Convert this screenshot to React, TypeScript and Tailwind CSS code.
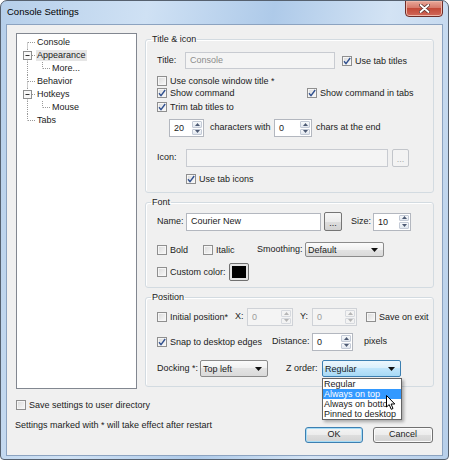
import React from "react";

const dot = { stroke: "#9a9a9a", strokeDasharray: "1 1" } as const;

function Check({ label, checked = false, className = "" }: { label?: string; checked?: boolean; className?: string }) {
  return (
    <div className={`flex h-[12px] items-center ${className}`}>
      <span className="flex h-[10px] w-[10px] shrink-0 items-center justify-center border border-[#8f8f8f] bg-[linear-gradient(135deg,#d9d9d9,#fafafa)] shadow-[inset_0_0_0_1px_#f6f6f6]">
        {checked && (
          <svg width="8" height="8" viewBox="0 0 8 8">
            <path d="M1 4.2L3 6.6L7.2 1" fill="none" stroke="#30508f" strokeWidth="1.4" />
          </svg>
        )}
      </span>
      {label && <span className="ml-[3px] whitespace-nowrap leading-[12px]">{label}</span>}
    </div>
  );
}

function Tri({ up = false, color = "#4d5a73" }: { up?: boolean; color?: string }) {
  return (
    <svg width="5" height="3" viewBox="0 0 5 3">
      <path d={up ? "M0 3L2.5 0L5 3Z" : "M0 0L5 0L2.5 3Z"} fill={color} />
    </svg>
  );
}

function Spin({ value, w, disabled = false }: { value: string; w: string; disabled?: boolean }) {
  const btn = disabled
    ? "flex flex-1 items-center justify-center rounded-[1px] border border-[#d6d9de] bg-[#f3f3f3]"
    : "flex flex-1 items-center justify-center rounded-[1px] border border-[#c3cad6] bg-[linear-gradient(#f7f9fb,#e1e7ef)]";
  return (
    <div
      className={`flex h-[18px] ${w} border ${
        disabled ? "border-[#cfd2d7] bg-[#f4f4f4] text-[#9c9c9c]" : "border-[#b3b7bf] bg-white"
      }`}
    >
      <span className="flex-1 pl-[4px] leading-[16px]">{value}</span>
      <div className="flex w-[11px] flex-col gap-[1px] py-[1px] pr-[1px]">
        <span className={btn}>
          <Tri up color={disabled ? "#b5b5b5" : "#4d5a73"} />
        </span>
        <span className={btn}>
          <Tri color={disabled ? "#b5b5b5" : "#4d5a73"} />
        </span>
      </div>
    </div>
  );
}

function Combo({ value, w, active = false }: { value: string; w: string; active?: boolean }) {
  return (
    <div
      className={`flex h-full ${w} items-center justify-between rounded-[2px] border pl-[2px] pr-[5px] ${
        active
          ? "border-[#3c7fb1] bg-[linear-gradient(#ecf7fd,#d9effc_50%,#bfe5fb_50%,#a7d9f5)]"
          : "border-[#8b8b8b] bg-[linear-gradient(#fbfbfb,#f0f0f0_50%,#e3e3e3_50%,#dadada)]"
      }`}
    >
      <span className="leading-[12px]">{value}</span>
      <svg width="7" height="4" viewBox="0 0 7 4">
        <path d="M0 0L7 0L3.5 4Z" fill="#111" />
      </svg>
    </div>
  );
}

function Dots({ disabled = false, className = "" }: { disabled?: boolean; className?: string }) {
  return (
    <div
      className={`flex items-end justify-center rounded-[2px] border pb-[3px] leading-[8px] ${className} ${
        disabled
          ? "border-[#c2c5ca] bg-[#f3f3f3] text-[#a8a8a8]"
          : "border-[#757575] bg-[linear-gradient(#f6f6f6,#ececec_50%,#dedede_50%,#d2d2d2)]"
      }`}
    >
      ...
    </div>
  );
}

function Group({ title, h, className = "", children }: { title: string; h: string; className?: string; children: React.ReactNode }) {
  return (
    <fieldset className={`${h} rounded-[3px] border border-[#d3dbe1] shadow-[inset_1px_1px_0_#ffffff] ${className}`}>
      <legend className="ml-[5px] px-[1px] leading-[12px]">{title}</legend>
      <div className="flex flex-col pl-[11px]">{children}</div>
    </fieldset>
  );
}

function Branch({ up = true, down = true, box = false }: { up?: boolean; down?: boolean; box?: boolean }) {
  return (
    <svg width="19" height="13" className="shrink-0">
      {up && <line x1="10.5" y1="0" x2="10.5" y2="6.5" {...dot} />}
      {down && <line x1="10.5" y1="6.5" x2="10.5" y2="13" {...dot} />}
      <line x1="11" y1="6.5" x2="18" y2="6.5" {...dot} />
      {box && (
        <>
          <rect x="6.5" y="2.5" width="8" height="8" fill="#f8f8f8" stroke="#8e8f8f" />
          <line x1="8.5" y1="6.5" x2="12.5" y2="6.5" stroke="#333" />
        </>
      )}
    </svg>
  );
}

function ChildBranch() {
  return (
    <svg width="34" height="13" className="shrink-0">
      <line x1="10.5" y1="0" x2="10.5" y2="13" {...dot} />
      <line x1="25.5" y1="0" x2="25.5" y2="6.5" {...dot} />
      <line x1="26" y1="6.5" x2="33" y2="6.5" {...dot} />
    </svg>
  );
}

function TreeRow({ children, label, selected = false }: { children: React.ReactNode; label: string; selected?: boolean }) {
  return (
    <div className="flex h-[13px] items-center">
      {children}
      <span className={`px-[1px] leading-[11px] ${selected ? "bg-[#e6e6e6]" : ""}`}>{label}</span>
    </div>
  );
}

export default function App() {
  return (
    <div className="flex h-[460px] w-[449px] flex-col overflow-hidden rounded-t-[7px] rounded-b-[4px] border border-[#56616f] bg-[linear-gradient(100deg,#b6cfea,#cfe1f4_28%,#aecae9_52%,#d3e3f4_74%,#b7cfea)] px-[5px] pb-[3px] font-['Liberation_Sans',Arial,sans-serif] text-[9px] text-[#1b1b1b]">
      {/* title bar */}
      <div className="flex h-[23px] shrink-0 items-start justify-between">
        <span className="mt-[5px] ml-[1px] text-[9.5px] leading-[12px] text-black">Console Settings</span>
        <div className="-mt-[1px] flex h-[17px] w-[38px] items-center justify-center rounded-b-[4px] border border-[#6e2d28] bg-[linear-gradient(#e9a899,#d67a6b_45%,#c34a38_50%,#d0685a)] shadow-[inset_0_0_0_1px_#eeb6a8]">
          <svg width="11" height="9" viewBox="0 0 11 9">
            <path d="M1.5 1L9.5 8M9.5 1L1.5 8" stroke="#5a3530" strokeWidth="3.4" strokeLinecap="round" />
            <path d="M1.5 1L9.5 8M9.5 1L1.5 8" stroke="#ffffff" strokeWidth="1.8" strokeLinecap="round" />
          </svg>
        </div>
      </div>

      {/* client area */}
      <div className="flex flex-1 flex-col border border-[#8ca3c0] bg-[#f0f0f0]">
        <div className="flex pt-[8px] pl-[9px]">
          {/* tree */}
          <div className="flex h-[356px] w-[121px] shrink-0 flex-col border border-[#828790] bg-white pt-[2px]">
            <TreeRow label="Console">
              <Branch up={false} />
            </TreeRow>
            <TreeRow label="Appearance" selected>
              <Branch box />
            </TreeRow>
            <TreeRow label="More...">
              <ChildBranch />
            </TreeRow>
            <TreeRow label="Behavior">
              <Branch />
            </TreeRow>
            <TreeRow label="Hotkeys">
              <Branch box />
            </TreeRow>
            <TreeRow label="Mouse">
              <ChildBranch />
            </TreeRow>
            <TreeRow label="Tabs">
              <Branch down={false} />
            </TreeRow>
          </div>

          {/* settings */}
          <div className="ml-[8px] flex w-[289px] flex-col">
            <Group title="Title & icon" h="h-[160px]">
              <div className="mt-[7px] flex h-[17px] items-center">
                <span className="w-[28px]">Title:</span>
                <div className="flex h-full w-[150px] items-center border border-[#c8cbd1] bg-[#f4f4f4] pl-[4px] text-[#8c8c8c]">
                  Console
                </div>
                <Check className="ml-[7px]" checked label="Use tab titles" />
              </div>
              <Check className="mt-[6px]" label="Use console window title *" />
              <div className="flex">
                <Check className="w-[150px]" checked label="Show command" />
                <Check checked label="Show command in tabs" />
              </div>
              <Check className="mt-[2px]" checked label="Trim tab titles to" />
              <div className="mt-[6px] flex h-[18px] items-center">
                <div className="ml-[12px]">
                  <Spin value="20" w="w-[35px]" />
                </div>
                <span className="ml-[6px] w-[64px] whitespace-nowrap">characters with</span>
                <Spin value="0" w="w-[38px]" />
                <span className="ml-[4px] whitespace-nowrap">chars at the end</span>
              </div>
              <div className="mt-[12px] flex h-[18px] items-center">
                <span className="w-[29px]">Icon:</span>
                <div className="h-full w-[202px] border border-[#c8cbd1] bg-[#f4f4f4]" />
                <Dots disabled className="ml-[4px] h-full w-[17px]" />
              </div>
              <Check className="mt-[6px] ml-[29px]" checked label="Use tab icons" />
            </Group>

            <Group title="Font" h="h-[92px]" className="mt-[3px]">
              <div className="mt-[4px] flex h-[19px] items-center">
                <span className="w-[29px]">Name:</span>
                <div className="flex h-[18px] w-[135px] items-center border border-[#b3b7bf] bg-white pl-[4px]">Courier New</div>
                <Dots className="ml-[3px] h-[19px] w-[18px]" />
                <span className="ml-[9px] w-[22px]">Size:</span>
                <Spin value="10" w="w-[38px]" />
              </div>
              <div className="mt-[11px] flex h-[15px] items-center">
                <Check className="w-[46px]" label="Bold" />
                <Check className="w-[54px]" label="Italic" />
                <span className="w-[48px] whitespace-nowrap">Smoothing:</span>
                <Combo value="Default" w="w-[79px]" />
              </div>
              <div className="mt-[6px] flex h-[18px] items-center">
                <Check className="w-[72px]" label="Custom color:" />
                <div className="flex h-full w-[20px] items-center justify-center rounded-[2px] border border-[#707070] bg-[#e4e4e4]">
                  <div className="h-[12px] w-[14px] bg-black" />
                </div>
              </div>
            </Group>

            <Group title="Position" h="h-[96px]" className="mt-[3px]">
              <div className="mt-[5px] flex h-[18px] items-center">
                <Check className="w-[78px]" label="Initial position*" />
                <span className="w-[12px]">X:</span>
                <Spin value="0" w="w-[46px]" disabled />
                <span className="ml-[7px] w-[12px]">Y:</span>
                <Spin value="0" w="w-[45px]" disabled />
                <Check className="ml-[9px]" label="Save on exit" />
              </div>
              <div className="mt-[7px] flex h-[18px] items-center">
                <Check className="w-[115px]" checked label="Snap to desktop edges" />
                <span className="w-[40px]">Distance:</span>
                <Spin value="0" w="w-[41px]" />
                <span className="ml-[11px]">pixels</span>
              </div>
              <div className="mt-[9px] flex h-[17px] items-center">
                <span className="w-[43px] whitespace-nowrap">Docking *:</span>
                <Combo value="Top left" w="w-[68px]" />
                <span className="ml-[18px] w-[36px] whitespace-nowrap">Z order:</span>
                <div className="relative h-full">
                  <Combo value="Regular" w="w-[79px]" active />
                  <div className="absolute top-[18px] left-0 z-10 flex w-[80px] flex-col border border-[#646464] bg-white p-0 shadow-[2px_2px_3px_rgba(0,0,0,0.3)]">
                    <span className="h-[10px] pl-[1px] leading-[10px]">Regular</span>
                    <span className="h-[10px] bg-[#3399ff] pl-[1px] leading-[10px] text-white">Always on top</span>
                    <span className="h-[10px] pl-[1px] leading-[10px]">Always on botto</span>
                    <span className="h-[10px] pl-[1px] leading-[10px]">Pinned to desktop</span>
                    <svg className="absolute top-[16px] left-[63px]" width="10" height="16" viewBox="0 0 10 16">
                      <path d="M0.5 0.5L0.5 12L3.2 9.6L5.2 14.3L7 13.5L5.1 9L8.8 9Z" fill="#fff" stroke="#000" strokeWidth="1" strokeLinejoin="round" />
                    </svg>
                  </div>
                </div>
              </div>
            </Group>
          </div>
        </div>

        {/* footer */}
        <div className="flex">
          <div className="flex flex-col pl-[9px]">
            <Check className="mt-[10px]" label="Save settings to user directory" />
            <span className="mt-[8px] -ml-[1px] leading-[12px]">Settings marked with * will take effect after restart</span>
          </div>
          <div className="mt-[38px] mr-[9px] ml-auto flex h-[16px] gap-[10px]">
            <div className="flex w-[58px] items-center justify-center rounded-[3px] border border-[#3c7fb1] bg-[linear-gradient(#f4f4f4,#ececec_50%,#dedede_50%,#d3d3d3)] shadow-[inset_0_0_0_1px_#a6dcf6]">
              OK
            </div>
            <div className="flex w-[60px] items-center justify-center rounded-[3px] border border-[#707070] bg-[linear-gradient(#f4f4f4,#ececec_50%,#dedede_50%,#d3d3d3)] shadow-[inset_0_0_0_1px_#fbfbfb]">
              Cancel
            </div>
          </div>
        </div>
      </div>
    </div>
  );
}
